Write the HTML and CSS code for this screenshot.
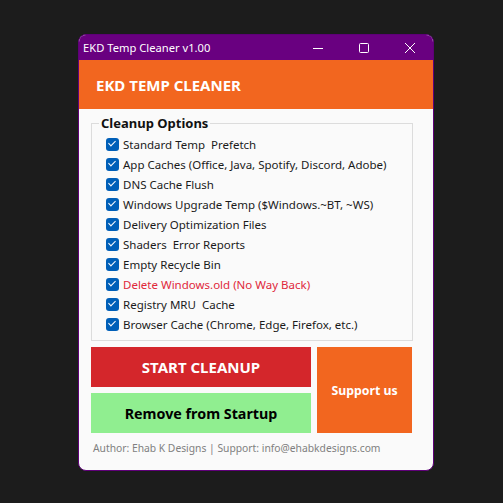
FILE: index.html
```html
<!DOCTYPE html>
<html lang="en">
<head>
    <meta charset="UTF-8">
    <title>EKD Temp Cleaner v1.00</title>
    <link rel="stylesheet" href="styles.css">
</head>
<body>
    <div class="window">
        <div class="titlebar">
            <span class="title">EKD Temp Cleaner v1.00</span>
            <div class="controls">
                <span class="ctrl">
                    <svg width="12" height="12" viewBox="0 0 12 12"><line x1="1" y1="6.5" x2="11" y2="6.5" stroke="#fff" stroke-width="1"/></svg>
                </span>
                <span class="ctrl">
                    <svg width="12" height="12" viewBox="0 0 12 12"><rect x="1.5" y="1.5" width="9" height="9" rx="1" fill="none" stroke="#fff" stroke-width="1"/></svg>
                </span>
                <span class="ctrl">
                    <svg width="12" height="12" viewBox="0 0 12 12"><path d="M1 1L11 11M11 1L1 11" stroke="#fff" stroke-width="1"/></svg>
                </span>
            </div>
        </div>

        <header class="header">EKD TEMP CLEANER</header>

        <div class="content">
            <fieldset class="options">
                <legend>Cleanup Options</legend>
                <label class="option"><span class="check"></span>Standard Temp &nbsp;Prefetch</label>
                <label class="option"><span class="check"></span>App Caches (Office, Java, Spotify, Discord, Adobe)</label>
                <label class="option"><span class="check"></span>DNS Cache Flush</label>
                <label class="option"><span class="check"></span>Windows Upgrade Temp ($Windows.~BT, ~WS)</label>
                <label class="option"><span class="check"></span>Delivery Optimization Files</label>
                <label class="option"><span class="check"></span>Shaders &nbsp;Error Reports</label>
                <label class="option"><span class="check"></span>Empty Recycle Bin</label>
                <label class="option danger"><span class="check"></span>Delete Windows.old (No Way Back)</label>
                <label class="option"><span class="check"></span>Registry MRU &nbsp;Cache</label>
                <label class="option"><span class="check"></span>Browser Cache (Chrome, Edge, Firefox, etc.)</label>
            </fieldset>

            <div class="actions">
                <button class="btn btn-start">START CLEANUP</button>
                <button class="btn btn-support">Support us</button>
                <button class="btn btn-startup">Remove from Startup</button>
            </div>

            <div class="footer">Author: Ehab K Designs | Support: info@ehabkdesigns.com</div>
        </div>
    </div>
</body>
</html>
```

FILE: styles.css
```css
* {
    margin: 0;
    padding: 0;
    box-sizing: border-box;
}

body {
    background-color: #1c1c1c;
    font-family: 'Noto Sans', 'Open Sans', sans-serif;
    height: 503px;
    padding: 34px 0 0 78px;
}

.window {
    width: 356px;
    height: 437px;
    background-color: #fafafa;
    border: 1px solid #5e0078;
    border-radius: 8px;
    overflow: hidden;
    display: flex;
    flex-direction: column;
}

.titlebar {
    height: 25px;
    background-color: #690080;
    display: flex;
    align-items: center;
    justify-content: space-between;
    padding-left: 4px;
}

.title {
    color: #ffffff;
    font-size: 11.2px;
}

.controls {
    display: flex;
    height: 100%;
}

.ctrl {
    width: 46px;
    display: flex;
    align-items: center;
    justify-content: center;
}

.header {
    height: 49px;
    background-color: #f2661f;
    color: #ffffff;
    font-size: 15px;
    font-weight: 700;
    display: flex;
    align-items: center;
    padding-left: 17px;
}

.content {
    padding: 5px 20px 0 12px;
}

.options {
    border: 1px solid #dcdcdc;
    padding: 2px 0 6px 14px;
}

.options legend {
    font-size: 13px;
    font-weight: 700;
    color: #111111;
    margin-left: -7px;
    padding: 0 2px;
    line-height: 18px;
}

.option {
    display: flex;
    align-items: center;
    height: 20px;
    font-size: 11.5px;
    color: #1a1a1a;
    gap: 4px;
}

.option.danger {
    color: #e0283a;
}

.check {
    width: 13px;
    height: 13px;
    border-radius: 3px;
    background-color: #005fb8;
    position: relative;
}

.check:after {
    content: "";
    position: absolute;
    left: 4px;
    top: 1.5px;
    width: 3px;
    height: 6px;
    border: solid #ffffff;
    border-width: 0 1.5px 1.5px 0;
    transform: rotate(45deg);
}

.actions {
    margin-top: 6px;
    display: grid;
    grid-template-columns: 220px 95px;
    grid-template-rows: 40px 40px;
    gap: 6px;
}

.btn {
    border: none;
    font-family: inherit;
    font-weight: 700;
    cursor: pointer;
}

.btn-start {
    background-color: #d4262b;
    color: #ffffff;
    font-size: 15px;
}

.btn-support {
    grid-row: span 2;
    background-color: #f2661f;
    color: #ffffff;
    font-size: 12.3px;
}

.btn-startup {
    background-color: #90ee90;
    color: #000000;
    font-size: 14.3px;
}

.footer {
    margin-top: 8px;
    padding-left: 2px;
    font-size: 10.3px;
    color: #808080;
}
```
